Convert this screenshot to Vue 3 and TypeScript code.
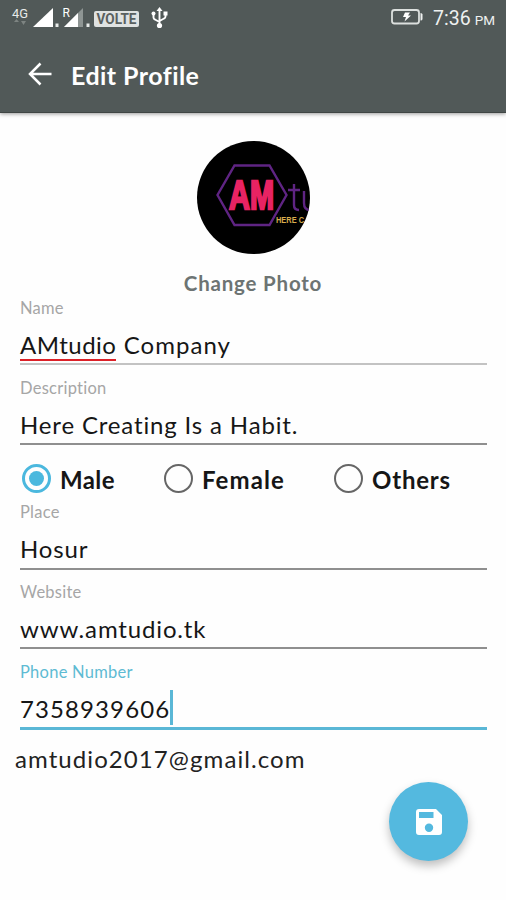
<script setup lang="ts">
import { ref } from 'vue'

interface Field {
  id: string
  label: string
  value: string
  marked?: string
  active?: boolean
}

const aboutFields: Field[] = [
  { id: 'name', label: 'Name', marked: 'AMtudio', value: ' Company' },
  { id: 'description', label: 'Description', value: 'Here Creating Is a Habit.' },
]

const contactFields: Field[] = [
  { id: 'place', label: 'Place', value: 'Hosur' },
  { id: 'website', label: 'Website', value: 'www.amtudio.tk' },
  { id: 'phone', label: 'Phone Number', value: '7358939606', active: true },
]

const genders = ['Male', 'Female', 'Others']
const gender = ref('Male')
</script>

<template>
  <main class="screen">
    <header class="header">
      <div class="status">
        <svg class="status-left" viewBox="0 0 180 36" width="180" height="36">
          <text x="12" y="18" class="net" textLength="16" lengthAdjust="spacingAndGlyphs">4G</text>
          <path d="M14 22h5l-2.500-3zM21 21h5l-2.500 4z" fill="#7d8482" />
          <path d="M33 27L53 8v19z" fill="#fff" />
          <path d="M55.500 23.500h3v3.500h-3z" fill="#e9ecea" />
          <path d="M64 27L83 8v19z" fill="#8e9593" />
          <path d="M64 27L78 13v14z" fill="#fff" />
          <text x="62.500" y="17" class="roam">R</text>
          <path d="M86.500 23.500h3v3.500h-3z" fill="#e9ecea" />
          <rect x="94" y="11" width="45" height="16" rx="2" fill="#dfe2e1" />
          <text x="96.500" y="24" class="volte" textLength="40" lengthAdjust="spacingAndGlyphs">VOLTE</text>
          <g fill="none" stroke="#fff" stroke-width="1.900">
            <path d="M159.500 10v15M153.500 14v3.500q0 1.500 1.500 2l4.500 2.500M165.500 13v3.500q0 1.500-1.500 2l-4.500 2.500" />
          </g>
          <path d="M159.500 7l3 4h-6zM163.500 11.500h4v4h-4z" fill="#fff" />
          <circle cx="153.500" cy="13.500" r="2" fill="#fff" />
          <circle cx="159.500" cy="25.500" r="2.600" fill="#fff" />
        </svg>
        <div class="status-right">
          <svg class="battery" viewBox="0 0 34 18" width="34" height="18">
            <rect x="2" y="2" width="27" height="13.500" rx="2.500" fill="none" stroke="#dce0de" stroke-width="1.800" />
            <path d="M30.500 5q2 0 2 1.500v4.500q0 1.500-2 1.500z" fill="#eef0ef" />
            <path d="M15 4.500h5l-2 3h3l-6.500 6 1.500-4.500h-3z" fill="#fff" />
          </svg>
          <span class="time">7:36</span><span class="meridiem">PM</span>
        </div>
      </div>
      <div class="toolbar">
        <svg class="back" viewBox="0 0 24 24" width="24" height="24">
          <path d="M23.500 12H2M12.500 1.500L2 12l10.500 10.500" fill="none" stroke="#fff" stroke-width="2.500" />
        </svg>
        <h1 class="title">Edit Profile</h1>
      </div>
    </header>

    <section class="photo">
      <svg class="avatar" viewBox="0 0 113 113" width="113" height="113">
        <defs>
          <clipPath id="avatar-clip"><circle cx="56.500" cy="56.500" r="56.500" /></clipPath>
        </defs>
        <g clip-path="url(#avatar-clip)">
          <rect width="113" height="113" fill="#000" />
          <path d="M37.500 24.500h35L89.500 54l-17 30h-35L20.500 54z" fill="none" stroke="#5f2483" stroke-width="2.400" />
          <text x="32" y="68" class="logo-am" textLength="45" lengthAdjust="spacingAndGlyphs">AM</text>
          <path d="M97 43v21q0 5 5 5M91 49h12M107 50v12q0 7 6 7" fill="none" stroke="#5f2483" stroke-width="2.400" />
          <text x="79" y="82" class="logo-tag" textLength="28" lengthAdjust="spacingAndGlyphs">HERE C</text>
        </g>
      </svg>
      <span class="change">Change Photo</span>
    </section>

    <form class="form">
      <div v-for="f in aboutFields" :key="f.id" class="field" :class="f.id">
        <label class="label">{{ f.label }}</label>
        <div class="value"><span v-if="f.marked" class="marked">{{ f.marked }}</span>{{ f.value }}</div>
      </div>

      <div class="genders">
        <label v-for="g in genders" :key="g" class="gender" @click="gender = g">
          <span class="radio" :class="{ checked: gender === g }"></span>
          <span class="gender-name" :class="g.toLowerCase()">{{ g }}</span>
        </label>
      </div>

      <div v-for="f in contactFields" :key="f.id" class="field" :class="[f.id, { active: f.active }]">
        <label class="label">{{ f.label }}</label>
        <div class="value">{{ f.value }}<i v-if="f.active" class="caret"></i></div>
      </div>
    </form>

    <p class="email">amtudio2017@gmail.com</p>

    <button class="fab" type="button" aria-label="Save">
      <svg viewBox="0 0 26 26" width="26" height="26">
        <path
          fill="#fff"
          fill-rule="evenodd"
          d="M3 0h17l6 6v17a3 3 0 0 1-3 3H3a3 3 0 0 1-3-3V3a3 3 0 0 1 3-3zM3 3v6h14.500V3zM13 14.500a4.200 4.200 0 1 0 0 8.400 4.200 4.200 0 0 0 0-8.400z"
        />
      </svg>
    </button>
  </main>
</template>

<style>
body {
  margin: 0;
  background: #fefefe;
}
</style>

<style scoped>
.screen {
  width: 506px;
  height: 900px;
  display: flex;
  flex-direction: column;
  overflow: hidden;
  background: #fefefe;
  font-family: Lato, "Noto Sans", sans-serif;
  color: #161616;
}
.header {
  flex: none;
  box-sizing: border-box;
  height: 113px;
  background: #515958;
  border-bottom: 1px solid #404645;
  box-shadow: 0 1px 4px rgba(0, 0, 0, 0.4);
}
.status {
  height: 36px;
  display: flex;
  justify-content: space-between;
}
.net {
  font: 12px Roboto, sans-serif;
  fill: #e8ebea;
}
.roam {
  font: 12px Roboto, sans-serif;
  fill: #fff;
}
.volte {
  font: bold 14px Roboto, sans-serif;
  fill: #59605f;
}
.status-right {
  display: flex;
  align-items: baseline;
  padding: 7px 11px 0 0;
  color: #eef1f0;
  font-family: Roboto, sans-serif;
}
.battery {
  align-self: flex-start;
  margin: 1px 9px 0 0;
}
.time {
  font-size: 19.500px;
  line-height: 23px;
}
.meridiem {
  margin-left: 4px;
  font-size: 13.500px;
}
.toolbar {
  display: flex;
  align-items: center;
  height: 76px;
  padding-left: 28px;
}
.title {
  margin: 2px 0 0 19px;
  color: #fff;
  font-size: 25px;
  line-height: 30px;
  font-weight: 700;
  letter-spacing: 0.450px;
}
.photo {
  display: flex;
  flex-direction: column;
  align-items: center;
  height: 184px;
}
.avatar {
  display: block;
  flex: none;
  margin-top: 28px;
}
.logo-am {
  font: bold 40px "Liberation Sans", sans-serif;
  fill: #e82363;
  stroke: #e82363;
  stroke-width: 2.400px;
}
.logo-tag {
  font: bold 9px "Liberation Sans", sans-serif;
  fill: #d9ad4d;
}
.change {
  margin-top: 17px;
  font-size: 20.500px;
  line-height: 24px;
  font-weight: 700;
  letter-spacing: 0.800px;
  color: #6d7473;
}
.form {
  display: flex;
  flex-direction: column;
  padding: 0 19px 0 20px;
}
.field {
  box-sizing: border-box;
  height: 68px;
  margin-bottom: 12px;
  border-bottom: 2px solid #8f8f8f;
}
.field.name {
  border-color: #c3c3c3;
}
.field.description {
  margin-bottom: 0;
}
.field.place {
  height: 69px;
  margin-bottom: 11px;
}
.field.phone {
  height: 69px;
  margin-bottom: 0;
  border-bottom: 3px solid #5ab7d6;
}
.label {
  display: block;
  font-size: 16.500px;
  line-height: 23px;
  letter-spacing: 0.250px;
  color: #a6a6a6;
}
.active .label {
  color: #5ebbd3;
}
.value {
  display: flex;
  align-items: center;
  height: 34px;
  margin-top: 8px;
  font-size: 24px;
  line-height: 34px;
  letter-spacing: 0.850px;
  white-space: pre;
}
.name .value {
  letter-spacing: 1.050px;
}
.phone .value {
  letter-spacing: 1.100px;
}
.value .marked {
  height: 28px;
  line-height: 28px;
  letter-spacing: 0.500px;
  box-shadow: 0 2px 0 #dc2128;
}
.caret {
  width: 3px;
  height: 35px;
  margin-top: -4px;
  background: #5ab7d6;
}
.genders {
  display: grid;
  grid-template-columns: 142px 170px 1fr;
  align-items: center;
  height: 56px;
  padding: 13px 0 0 2px;
  box-sizing: border-box;
}
.gender {
  display: flex;
  align-items: center;
}
.radio {
  box-sizing: border-box;
  display: grid;
  place-items: center;
  width: 29px;
  height: 29px;
  margin-top: -2px;
  border: 2.500px solid #666;
  border-radius: 50%;
}
.radio.checked {
  border: 3px solid #4bb8de;
}
.radio.checked::before {
  content: "";
  width: 15px;
  height: 15px;
  border-radius: 50%;
  background: #4bb8de;
}
.gender-name {
  margin: 0 0 0 9px;
  font-size: 24px;
  line-height: 30px;
  font-weight: 700;
  letter-spacing: 0.800px;
}
.gender-name.male {
  letter-spacing: 0.400px;
}
.gender-name.female {
  letter-spacing: 1.100px;
}
.email {
  margin: 12px 0 0 15px;
  font-size: 24px;
  line-height: 34px;
  letter-spacing: 1.080px;
  color: #222;
}
.fab {
  display: grid;
  place-items: center;
  flex: none;
  align-self: flex-end;
  width: 79px;
  height: 79px;
  margin: 6px 38px 0 0;
  padding: 0;
  border: 0;
  border-radius: 50%;
  background: #54b9df;
  box-shadow: 0 5px 10px rgba(0, 0, 0, 0.25);
}
</style>
